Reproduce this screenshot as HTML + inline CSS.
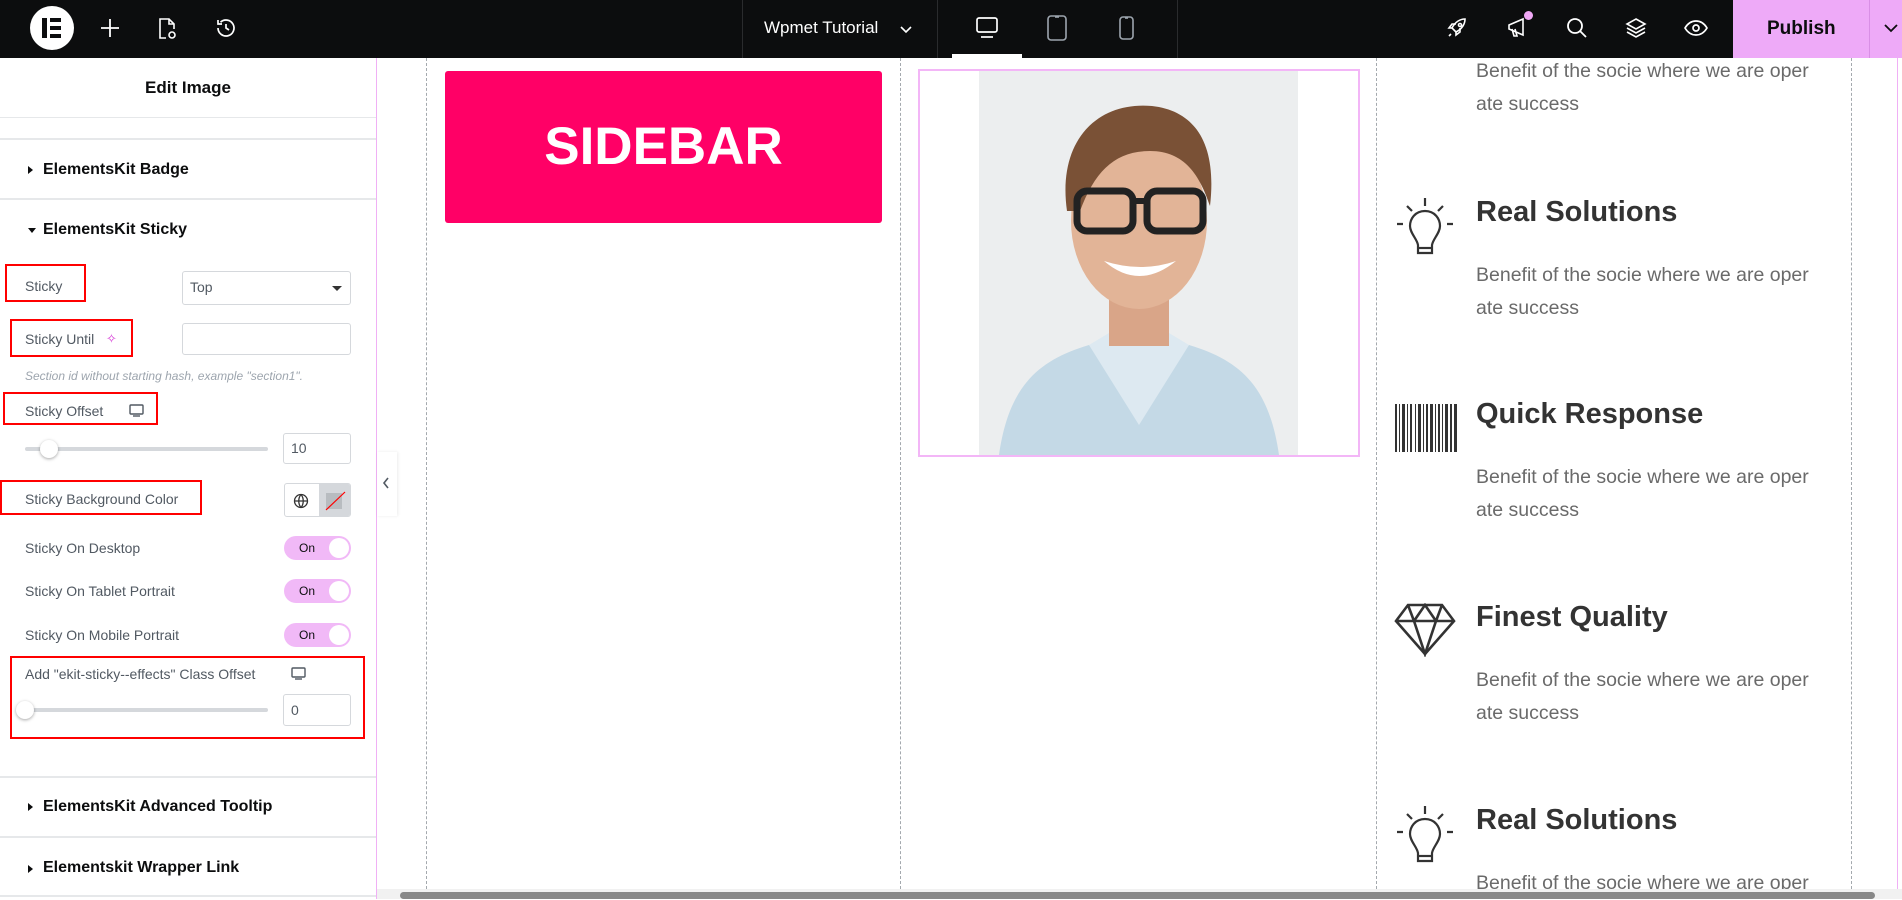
<!DOCTYPE html>
<html><head><meta charset="utf-8">
<style>
*{box-sizing:border-box;margin:0;padding:0}
body{width:1902px;height:899px;overflow:hidden;background:#fff;font-family:"Liberation Sans",Arial,sans-serif;position:relative}
.a{position:absolute}
.top{left:0;top:0;width:1902px;height:58px;background:#0c0d0e}
.side{left:0;top:58px;width:377px;height:841px;background:#fff;border-right:1px solid #f0b0f5}
.hl{height:2px;background:#e6e8ea;left:0;width:376px}
.lbl{font-size:14px;color:#515962;left:25px}
.hd{font-size:16px;font-weight:bold;color:#0c0d0e;left:43px}
.tri{width:0;height:0;border-top:4px solid transparent;border-bottom:4px solid transparent;border-left:5px solid #0c0d0e;left:28px}
.red{border:2px solid #f00}
.inp{border:1px solid #d5d8dc;border-radius:3px;background:#fff}
.track{height:4px;background:#d5d8dc;border-radius:2px}
.knob{width:18px;height:18px;border-radius:50%;background:#fff;box-shadow:0 1px 3px rgba(0,0,0,.35)}
.tog{width:67px;height:24px;border-radius:12px;background:#f1b9f7;left:284px}
.tog span{position:absolute;left:15px;top:5px;font-size:12px;color:#0c0d0e}
.tog i{position:absolute;right:2px;top:2px;width:20px;height:20px;border-radius:50%;background:#fff}
.dash{top:58px;height:841px;border-left:1px dashed #a4a9ae;width:0}
.body{font-size:19.5px;color:#6a6a6a;left:1476px;line-height:33px}
.h2{font-size:29px;font-weight:bold;color:#333;left:1476px}
</style></head><body>

<div class="a top">
  <div class="a" style="left:30px;top:6px;width:44px;height:44px;border-radius:50%;background:#fff"></div>
  <div class="a" style="left:42px;top:18px;width:5px;height:20px;background:#0c0d0e"></div>
  <div class="a" style="left:50px;top:18px;width:11px;height:4px;background:#0c0d0e"></div>
  <div class="a" style="left:50px;top:26px;width:11px;height:4px;background:#0c0d0e"></div>
  <div class="a" style="left:50px;top:34px;width:11px;height:4px;background:#0c0d0e"></div>
  <svg class="a" style="left:98px;top:16px" width="24" height="24" fill="none" stroke="#fff" stroke-width="1.8"><path d="M12 3v18M3 12h18"/></svg>
  <svg class="a" style="left:155px;top:16px" width="24" height="26" fill="none" stroke="#fff" stroke-width="1.6"><path d="M11 22H5V3h9l5 5v5"/><path d="M14 3v5h5"/><circle cx="17" cy="19" r="3"/></svg>
  <svg class="a" style="left:214px;top:16px" width="24" height="24" fill="none" stroke="#fff" stroke-width="1.7"><path d="M4 12a8 8 0 1 0 2.5-5.8"/><path d="M4 4v4h4"/><path d="M12 8v4l3 2"/></svg>
  <div class="a" style="left:742px;top:0;width:1px;height:58px;background:#2a2b2d"></div>
  <div class="a" style="left:937px;top:0;width:1px;height:58px;background:#2a2b2d"></div>
  <div class="a" style="left:1177px;top:0;width:1px;height:58px;background:#2a2b2d"></div>
  <div class="a" style="left:764px;top:18px;font-size:17px;color:#fff">Wpmet Tutorial</div>
  <svg class="a" style="left:899px;top:22px" width="14" height="14" fill="none" stroke="#fff" stroke-width="1.6"><path d="M2 5l5 5 5-5"/></svg>
  <svg class="a" style="left:975px;top:16px" width="24" height="24" fill="none" stroke="#fff" stroke-width="1.7"><rect x="2" y="2" width="20" height="14" rx="2"/><path d="M6 21h12"/></svg>
  <div class="a" style="left:952px;top:54px;width:70px;height:4px;background:#fff"></div>
  <svg class="a" style="left:1045px;top:14px" width="24" height="28" fill="none" stroke="#9da5ae" stroke-width="1.6"><rect x="3" y="2" width="18" height="24" rx="3"/><path d="M10 3h4"/></svg>
  <svg class="a" style="left:1117px;top:15px" width="20" height="26" fill="none" stroke="#9da5ae" stroke-width="1.6"><rect x="3" y="2" width="13" height="22" rx="3"/><path d="M8 3h3"/></svg>
  <svg class="a" style="left:1446px;top:17px" width="22" height="22" fill="none" stroke="#fff" stroke-width="1.6"><path d="M9 14l-3-3c3-6 8-9 13-9 0 5-3 10-9 13z"/><circle cx="14" cy="8" r="1.5"/><path d="M6 11l-3 0 3-4h4M10 15v3l4-3v-4M5 17l-2 2"/></svg>
  <svg class="a" style="left:1506px;top:15px" width="24" height="24" fill="none" stroke="#fff" stroke-width="1.6"><path d="M3 10l14-6v16L3 14z"/><path d="M6 14l2 7h3l-2-7"/></svg>
  <div class="a" style="left:1524px;top:11px;width:9px;height:9px;border-radius:50%;background:#f0a8f5"></div>
  <svg class="a" style="left:1565px;top:16px" width="24" height="24" fill="none" stroke="#fff" stroke-width="1.8"><circle cx="10" cy="10" r="7"/><path d="M15 15l6 6"/></svg>
  <svg class="a" style="left:1624px;top:16px" width="24" height="24" fill="none" stroke="#fff" stroke-width="1.6"><path d="M12 3l9 5-9 5-9-5z"/><path d="M3 12l9 5 9-5M3 16l9 5 9-5"/></svg>
  <svg class="a" style="left:1683px;top:16px" width="26" height="24" fill="none" stroke="#fff" stroke-width="1.7"><path d="M2 12c3-5 7-7 11-7s8 2 11 7c-3 5-7 7-11 7s-8-2-11-7z"/><circle cx="13" cy="12" r="3"/></svg>
  <div class="a" style="left:1733px;top:0;width:169px;height:58px;background:#eeaaf8"></div>
  <div class="a" style="left:1869px;top:0;width:1px;height:58px;background:#d98fe6"></div>
  <div class="a" style="left:1767px;top:18px;font-size:19px;font-weight:bold;color:#0c0d0e">Publish</div>
  <svg class="a" style="left:1883px;top:20px" width="19" height="16" fill="none" stroke="#0c0d0e" stroke-width="1.8"><path d="M2 5l6 6 6-6"/></svg>
</div>

<div class="a side">
  <div class="a" style="left:0;width:376px;top:20px;text-align:center;font-size:17px;font-weight:bold;color:#0c0d0e">Edit Image</div>
</div>
<div class="a hl" style="top:117px;height:1px"></div>
<div class="a hl" style="top:138px"></div>
<div class="a tri" style="top:166px"></div>
<div class="a hd" style="top:161px">ElementsKit Badge</div>
<div class="a hl" style="top:198px"></div>
<div class="a" style="left:28px;top:228px;width:0;height:0;border-left:4px solid transparent;border-right:4px solid transparent;border-top:5px solid #0c0d0e"></div>
<div class="a hd" style="top:221px">ElementsKit Sticky</div>

<div class="a red" style="left:5px;top:264px;width:81px;height:38px"></div>
<div class="a lbl" style="top:278px">Sticky</div>
<div class="a inp" style="left:182px;top:271px;width:169px;height:34px"></div>
<div class="a" style="left:190px;top:279px;font-size:14px;color:#515962">Top</div>
<div class="a" style="left:332px;top:286px;width:0;height:0;border-left:5px solid transparent;border-right:5px solid transparent;border-top:5px solid #333"></div>

<div class="a red" style="left:10px;top:319px;width:123px;height:38px"></div>
<div class="a lbl" style="top:331px">Sticky Until</div>
<div class="a" style="left:106px;top:331px;font-size:13px;color:#d63bd6">✧</div>
<div class="a inp" style="left:182px;top:323px;width:169px;height:32px"></div>
<div class="a" style="left:25px;top:369px;font-size:12px;font-style:italic;color:#9da5ae">Section id without starting hash, example "section1".</div>

<div class="a red" style="left:3px;top:392px;width:155px;height:33px"></div>
<div class="a lbl" style="top:403px">Sticky Offset</div>
<svg class="a" style="left:129px;top:404px" width="15" height="14"><rect x="1" y="1" width="13" height="9" rx="1" fill="none" stroke="#515962" stroke-width="1.4"/><path d="M4 12h7" stroke="#515962" stroke-width="1.4"/></svg>
<div class="a track" style="left:25px;top:447px;width:243px"></div>
<div class="a knob" style="left:40px;top:440px"></div>
<div class="a inp" style="left:283px;top:433px;width:68px;height:31px"></div>
<div class="a" style="left:291px;top:440px;font-size:14px;color:#515962">10</div>

<div class="a red" style="left:0;top:480px;width:202px;height:35px"></div>
<div class="a lbl" style="top:491px">Sticky Background Color</div>
<div class="a inp" style="left:284px;top:483px;width:67px;height:34px;overflow:hidden">
  <div class="a" style="left:34px;top:0;width:33px;height:34px;background:#d5d8dc"></div>
  <svg class="a" style="left:8px;top:9px" width="16" height="16" fill="none" stroke="#333" stroke-width="1.3"><circle cx="8" cy="8" r="6.5"/><path d="M1.5 8h13M8 1.5c-3 3.5-3 9.5 0 13M8 1.5c3 3.5 3 9.5 0 13"/></svg>
  <div class="a" style="left:41px;top:9px;width:16px;height:16px;background:#b8bcc0"></div>
  <svg class="a" style="left:38px;top:5px" width="24" height="24"><path d="M3 21L22 3" stroke="#f00" stroke-width="1.2"/></svg>
</div>

<div class="a lbl" style="top:540px">Sticky On Desktop</div>
<div class="a tog" style="top:536px"><span>On</span><i></i></div>
<div class="a lbl" style="top:583px">Sticky On Tablet Portrait</div>
<div class="a tog" style="top:579px"><span>On</span><i></i></div>
<div class="a lbl" style="top:627px">Sticky On Mobile Portrait</div>
<div class="a tog" style="top:623px"><span>On</span><i></i></div>

<div class="a red" style="left:10px;top:656px;width:355px;height:83px"></div>
<div class="a lbl" style="top:666px">Add "ekit-sticky--effects" Class Offset</div>
<svg class="a" style="left:291px;top:667px" width="15" height="14"><rect x="1" y="1" width="13" height="9" rx="1" fill="none" stroke="#515962" stroke-width="1.4"/><path d="M4 12h7" stroke="#515962" stroke-width="1.4"/></svg>
<div class="a track" style="left:25px;top:708px;width:243px"></div>
<div class="a knob" style="left:16px;top:701px"></div>
<div class="a inp" style="left:283px;top:694px;width:68px;height:32px"></div>
<div class="a" style="left:291px;top:702px;font-size:14px;color:#515962">0</div>

<div class="a hl" style="top:776px"></div>
<div class="a tri" style="top:803px"></div>
<div class="a hd" style="top:798px">ElementsKit Advanced Tooltip</div>
<div class="a hl" style="top:836px"></div>
<div class="a tri" style="top:865px"></div>
<div class="a hd" style="top:859px">Elementskit Wrapper Link</div>
<div class="a hl" style="top:895px"></div>

<div class="a" style="left:377px;top:452px;width:20px;height:64px;background:#fff;box-shadow:1px 0 3px rgba(0,0,0,.08)"></div>
<svg class="a" style="left:381px;top:476px" width="10" height="14" fill="none" stroke="#515962" stroke-width="1.6"><path d="M7 2L3 7l4 5"/></svg>

<div class="a dash" style="left:426px"></div>
<div class="a dash" style="left:900px"></div>
<div class="a dash" style="left:1376px"></div>
<div class="a dash" style="left:1851px"></div>
<div class="a" style="left:1897px;top:58px;width:1px;height:841px;background:#f0b0f5"></div>

<div class="a" style="left:445px;top:71px;width:437px;height:152px;background:#ff0066;border-radius:3px"></div>
<div class="a" style="left:445px;top:116px;width:437px;text-align:center;font-size:53px;font-weight:bold;color:#fff">SIDEBAR</div>

<div class="a" style="left:918px;top:69px;width:442px;height:388px;border:2px solid #f3b6f7"></div>
<svg class="a" style="left:979px;top:71px" width="319" height="384" viewBox="0 0 319 384">
  <rect width="319" height="384" fill="#eceeef"/>
  <path d="M20 384c10-70 40-95 90-110l50 30 50-30c50 15 80 40 90 110z" fill="#c4d9e6"/>
  <path d="M110 274l50 80 50-80-25-15h-50z" fill="#dde9f1"/>
  <rect x="130" y="215" width="60" height="60" fill="#d9a588"/>
  <ellipse cx="160" cy="150" rx="68" ry="88" fill="#e2b497"/>
  <path d="M88 140c-10-70 30-110 85-105 45 5 65 40 58 100-10-30-25-55-60-55-35 0-55 20-70 60z" fill="#7a5136"/>
  <rect x="98" y="120" width="56" height="40" rx="10" fill="none" stroke="#222" stroke-width="7"/>
  <rect x="168" y="120" width="56" height="40" rx="10" fill="none" stroke="#222" stroke-width="7"/>
  <path d="M154 130h14" stroke="#222" stroke-width="6"/>
  <path d="M125 190q35 30 72 0q-35 12-72 0z" fill="#fff"/>
</svg>

<div class="a body" style="top:55px">Benefit of the socie where we are oper<br>ate success</div>

<svg class="a" style="left:1395px;top:196px" width="60" height="62" fill="none" stroke="#333" stroke-width="2.2"><path d="M30 2v8M12 10l5 5M48 10l-5 5M2 28h6M52 28h6"/><path d="M30 15c-10 0-15 8-15 15 0 7 7 13 8 19v8h14v-8c1-6 8-12 8-19 0-7-5-15-15-15z"/><path d="M23 52h14"/></svg>
<div class="a h2" style="top:196px">Real Solutions</div>
<div class="a body" style="top:259px">Benefit of the socie where we are oper<br>ate success</div>

<svg class="a" style="left:1395px;top:404px" width="62" height="48"><g fill="#333"><rect x="0" y="0" width="2" height="48"/><rect x="4" y="0" width="1" height="48"/><rect x="7" y="0" width="3" height="48"/><rect x="12" y="0" width="1" height="48"/><rect x="15" y="0" width="2" height="48"/><rect x="20" y="0" width="1" height="48"/><rect x="23" y="0" width="3" height="48"/><rect x="28" y="0" width="1" height="48"/><rect x="31" y="0" width="2" height="48"/><rect x="35" y="0" width="3" height="48"/><rect x="40" y="0" width="1" height="48"/><rect x="43" y="0" width="2" height="48"/><rect x="47" y="0" width="1" height="48"/><rect x="50" y="0" width="3" height="48"/><rect x="55" y="0" width="2" height="48"/><rect x="59" y="0" width="3" height="48"/></g></svg>
<div class="a h2" style="top:398px">Quick Response</div>
<div class="a body" style="top:461px">Benefit of the socie where we are oper<br>ate success</div>

<svg class="a" style="left:1394px;top:603px" width="62" height="54" fill="none" stroke="#333" stroke-width="2.6"><path d="M14 2h34l12 16-29 33L2 18z"/><path d="M2 18h58M14 2l6 16 11 33 11-33 6-16M20 18l11-16 11 16"/></svg>
<div class="a h2" style="top:601px">Finest Quality</div>
<div class="a body" style="top:664px">Benefit of the socie where we are oper<br>ate success</div>

<svg class="a" style="left:1395px;top:804px" width="60" height="62" fill="none" stroke="#333" stroke-width="2.2"><path d="M30 2v8M12 10l5 5M48 10l-5 5M2 28h6M52 28h6"/><path d="M30 15c-10 0-15 8-15 15 0 7 7 13 8 19v8h14v-8c1-6 8-12 8-19 0-7-5-15-15-15z"/><path d="M23 52h14"/></svg>
<div class="a h2" style="top:804px">Real Solutions</div>
<div class="a body" style="top:867px">Benefit of the socie where we are oper</div>

<div class="a" style="left:377px;top:889px;width:1525px;height:10px;background:#f1f1f1"></div>
<div class="a" style="left:400px;top:892px;width:1475px;height:7px;background:#888;border-radius:4px"></div>
</body></html>
